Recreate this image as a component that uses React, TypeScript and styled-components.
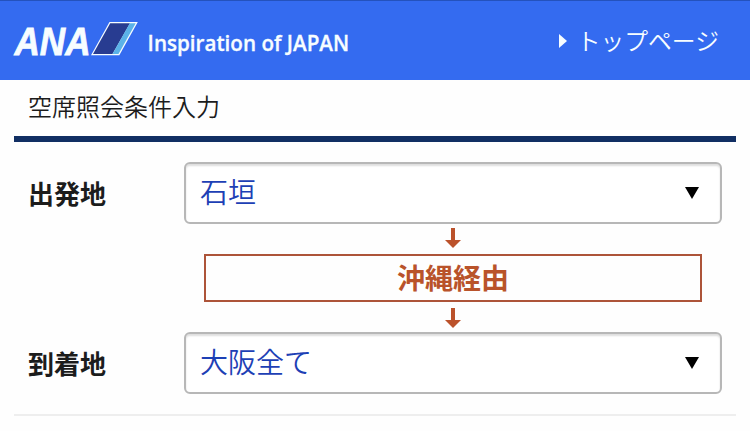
import React from "react";
import styled, { createGlobalStyle } from "styled-components";

const GlobalStyle = createGlobalStyle`
  * { box-sizing: border-box; }
  body {
    margin: 0;
    background: #fefefe;
    color: #1c1c1c;
    font-family: "Noto Sans CJK JP", sans-serif;
  }
`;

const Page = styled.div`
  height: 431px;
  overflow: hidden;
`;

const Header = styled.header`
  display: flex;
  align-items: center;
  height: 80px;
  padding: 0 31px 0 4px;
  border-top: 1px solid #2452bd;
  background: #346bf0;
  color: #f7fdff;
`;

const Logo = styled.svg`
  flex: none;
  width: 350px;
  height: 79px;
  fill: currentColor;
`;

const TopLink = styled.a`
  display: flex;
  align-items: center;
  margin-left: auto;
  color: inherit;
  font-size: 23.8px;
  font-weight: 350;
  line-height: 36px;
  white-space: nowrap;
`;

const LinkText = styled.span`
  padding-bottom: 2px;
`;

const LinkMarker = styled.svg`
  width: 8px;
  height: 14px;
  margin: 1px 10px 0 0;
  fill: currentColor;
`;

const Title = styled.h1`
  height: 62px;
  margin: 0 14px;
  padding: 8px 14px 0;
  border-bottom: 6px solid #112f63;
  font-size: 24px;
  font-weight: 350;
  line-height: 36px;
`;

const Form = styled.main`
  display: grid;
  grid-template-columns: 156px 538px;
  grid-template-rows: 62px 108px 62px;
  height: 274px;
  margin: 0 14px;
  padding: 20px 14px;
  border-bottom: 2px solid #eee;
`;

const Label = styled.label`
  align-self: center;
  padding-bottom: 1px;
  font-size: 26px;
  font-weight: 700;
  line-height: 38px;
`;

const Select = styled.button`
  display: flex;
  align-items: center;
  justify-content: space-between;
  padding: 0 21px 5px 14px;
  border: 2px solid #b7b7b7;
  border-radius: 6px;
  background: #fff;
  box-shadow: inset 0 2px 2px #dedede;
  color: #1d40b5;
  font: 350 28px/40px "Noto Sans CJK JP", sans-serif;
`;

const Caret = styled.svg`
  width: 14px;
  height: 12px;
  margin-top: 5px;
  fill: #000;
`;

const Via = styled.div`
  grid-column: 2;
  display: flex;
  flex-direction: column;
  align-items: center;
  justify-content: space-between;
  padding: 4px 20px;
`;

const ViaBox = styled.div`
  display: flex;
  align-items: center;
  justify-content: center;
  width: 100%;
  height: 48px;
  padding-bottom: 2px;
  border: 2px solid #ad5439;
  color: #b9532a;
  font-size: 28px;
  font-weight: 700;
  line-height: 42px;
`;

const ArrowIcon = styled.svg`
  width: 16px;
  height: 20px;
  fill: #bb522b;
`;

const DownArrow = () => (
  <ArrowIcon viewBox="0 0 16 20">
    <path d="M6 0h4v12h6l-8 8-8-8h6z" />
  </ArrowIcon>
);

const PlaceField = ({ label, value }: { label: string; value: string }) => (
  <>
    <Label>{label}</Label>
    <Select type="button" aria-label={label}>
      {value}
      <Caret viewBox="0 0 14 12">
        <path d="M0 0h14L7 12z" />
      </Caret>
    </Select>
  </>
);

const BrandLogo = () => (
  <Logo viewBox="4 1 350 79" aria-label="ANA Inspiration of JAPAN">
    <text
      x="14.5"
      y="54.6"
      fontFamily="Liberation Sans"
      fontSize="38.5"
      fontWeight="700"
      fontStyle="italic"
      stroke="currentColor"
      strokeWidth="0.8"
      textLength="76"
      lengthAdjust="spacingAndGlyphs"
    >
      ANA
    </text>
    <path d="M91 55.2 109.5 22H137.8L119.3 55.2z" />
    <path fill="#283c91" d="M93 54 110.2 23.2H130L112.5 54z" />
    <path fill="#5bb2e8" d="M112.5 54 129.8 23.2H135.7L118.5 54z" />
    <text
      x="147.6"
      y="50.5"
      fontFamily="Open Sans"
      fontSize="21"
      fontWeight="600"
      textLength="201.5"
      lengthAdjust="spacingAndGlyphs"
      stroke="currentColor"
      strokeWidth="0.3"
    >
      Inspiration of JAPAN
    </text>
  </Logo>
);

export default function App() {
  return (
    <>
      <GlobalStyle />
      <Page>
        <Header>
          <BrandLogo />
          <TopLink>
            <LinkMarker viewBox="0 0 8 14">
              <path d="M0 0 8 7 0 14z" />
            </LinkMarker>
            <LinkText>トップページ</LinkText>
          </TopLink>
        </Header>
        <Title>空席照会条件入力</Title>
        <Form>
          <PlaceField label="出発地" value="石垣" />
          <Via>
            <DownArrow />
            <ViaBox>沖縄経由</ViaBox>
            <DownArrow />
          </Via>
          <PlaceField label="到着地" value="大阪全て" />
        </Form>
      </Page>
    </>
  );
}
